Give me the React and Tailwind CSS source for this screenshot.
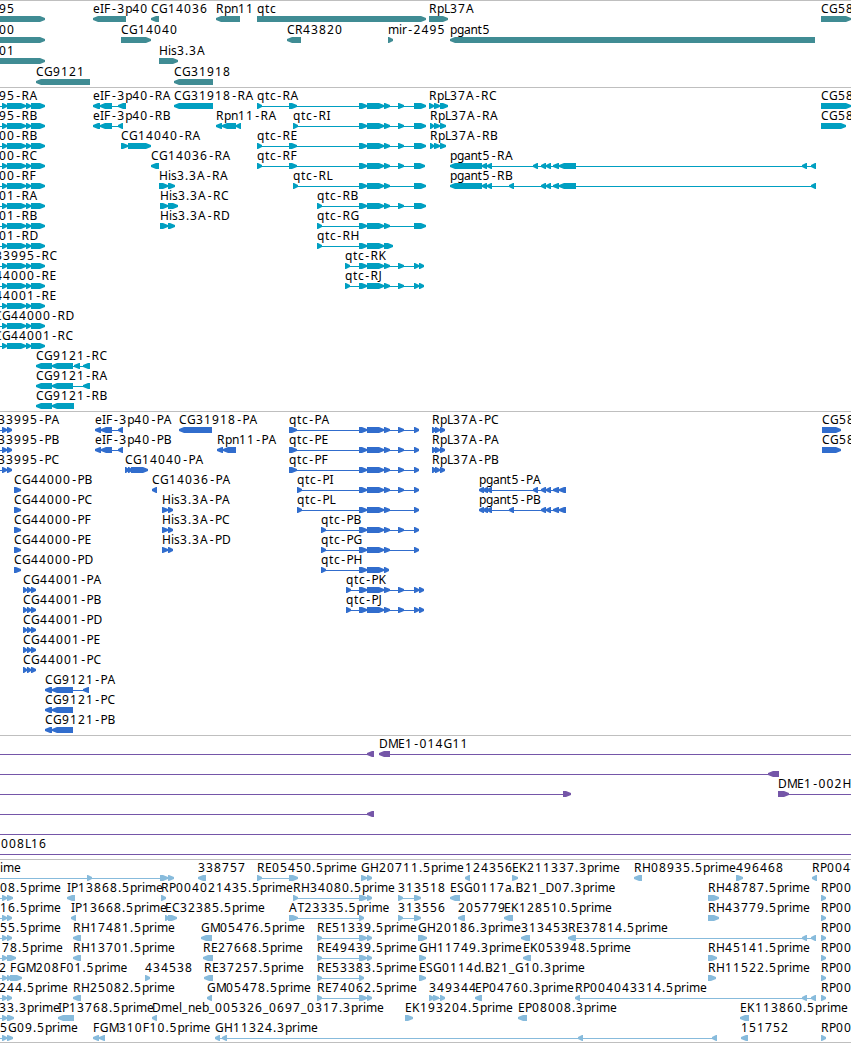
import clsx from 'clsx'

// Horizontal advance of each label character, in pixels
const ADVANCE = {
  A: 8.5, B: 8, C: 8, D: 9, E: 7, F: 6.7, G: 9, H: 9, I: 4, J: 4, K: 8, L: 6, M: 10, P: 7, R: 8, S: 7, T: 7,
  a: 6.5, b: 7, c: 6, d: 7, e: 7, g: 7, i: 3, l: 3, m: 11, n: 7, p: 7, q: 8, r: 5, s: 6, t: 5,
  '-': 6.5, '.': 4, _: 6,
}

// x position of every character, starting at the left edge of the label
const charPositions = (text, start) => {
  let x = start
  return [...text].map((ch) => {
    // hyphens are narrow, so centre them in their slot
    const pos = ch === '-' ? x + 1.2 : x
    x += ADVANCE[ch] ?? 8
    return pos
  })
}

// Feature helpers: f = forward strand, r = reverse strand
const f = (label, blocks, opts = {}) => ({ label, blocks, dir: 1, ...opts })
const r = (label, blocks, opts = {}) => ({ label, blocks, dir: -1, ...opts })

// Exons shared by several transcripts
const CLUSTER = [[2, 7], [7, 26], [26, 31], [31, 45]]
const cluster = (label, x) => f(label, CLUSTER, { x, from: 0 })

const QTC_MID = [[359, 367], [367, 384], [384, 390]]
const qtcR = (label, start, tail) => f(label, [...start, ...QTC_MID, ...tail])
const SHORT = [398, 404]
const PGANT_END = [[541, 546], [546, 551], [553, 559]]
const RP = f('RP00', [[821, 826]])
const pair = (label, x, end) => f(label, [[2, 7], [7, end]], { x, from: 0 })

const genes = [
  [
    f('95', [[-10, 45]], { x: -1 }),
    r('eIF-3p40', [[93, 126]]),
    r('CG14036', [[151, 159]]),
    r('Rpn11', [[216, 240]]),
    f('qtc', [[257, 426]]),
    f('RpL37A', [[429, 448]]),
    f('CG58', [[821, 851]]),
  ],
  [
    f('00', [[-10, 45]], { x: -1 }),
    f('CG14040', [[121, 151]]),
    r('CR43820', [[287, 301]]),
    f('mir-2495', [[388, 393]]),
    r('pgant5', [[450, 815]]),
  ],
  [f('01', [[-10, 45]], { x: -1 }), f('His3.3A', [[159, 178]])],
  [r('CG9121', [[36, 90]]), r('CG31918', [[174, 213]])],
]

const transcripts = [
  [
    cluster('95-RA', -1),
    r('eIF-3p40-RA', [[93, 100], [100, 112], [118, 126]]),
    r('CG31918-RA', [[174, 213]]),
    qtcR('qtc-RA', [[257, 262], [289, 297]], [SHORT, [414, 426]]),
    f('RpL37A-RC', [[429, 434], [434, 440], [440, 448]]),
    f('CG58', [[821, 851]]),
  ],
  [
    cluster('95-RB', -1),
    r('eIF-3p40-RB', [[93, 100], [100, 112], [118, 123]]),
    r('Rpn11-RA', [[216, 222], [222, 236], [236, 241]]),
    qtcR('qtc-RI', [[293, 298]], [SHORT, [414, 426]]),
    f('RpL37A-RA', [[430, 434], [434, 440], [440, 446]]),
    f('CG58', [[821, 846]]),
  ],
  [
    cluster('00-RB', -1),
    f('CG14040-RA', [[121, 128], [128, 151]]),
    qtcR('qtc-RE', [[257, 262], [289, 297]], [SHORT, [414, 426]]),
    f('RpL37A-RB', [[430, 434], [434, 440], [440, 446]]),
  ],
  [
    cluster('00-RC', -1),
    r('CG14036-RA', [[151, 159]]),
    qtcR('qtc-RF', [[257, 262], [289, 297]], [SHORT, [414, 425]]),
    r('pgant5-RA', [[450, 482], [482, 487], [487, 492], [533, 538], ...PGANT_END, [559, 576], [802, 807], [811, 816]]),
  ],
  [
    cluster('00-RF', -1),
    f('His3.3A-RA', [[159, 168], [168, 175]]),
    qtcR('qtc-RL', [[293, 298]], [[414, 426]]),
    r('pgant5-RB', [[450, 482], [482, 487], [487, 492], [509, 514], ...PGANT_END, [559, 576], [811, 816]]),
  ],
  [
    cluster('01-RA', -1),
    f('His3.3A-RC', [[160, 168], [168, 178]]),
    qtcR('qtc-RB', [[317, 322]], [SHORT, [414, 426]]),
  ],
  [
    cluster('01-RB', -1),
    f('His3.3A-RD', [[160, 168], [168, 175]]),
    qtcR('qtc-RG', [[317, 322]], [[414, 426]]),
  ],
  [cluster('01-RD', -1), f('qtc-RH', [[317, 322], [359, 367], [367, 384], [384, 393]])],
  [cluster('33995-RC', -5), qtcR('qtc-RK', [[345, 350]], [SHORT, [414, 419], [419, 424]])],
  [cluster('44000-RE', -5), qtcR('qtc-RJ', [[345, 350]], [SHORT, [414, 419], [419, 424]])],
  [cluster('44001-RE', -5)],
  [cluster('CG44000-RD', -6)],
  [cluster('CG44001-RC', -6)],
  [r('CG9121-RC', [[36, 52], [52, 73], [74, 80], [83, 90]])],
  [r('CG9121-RA', [[36, 52], [52, 73], [83, 90]])],
  [r('CG9121-RB', [[36, 52], [52, 74]])],
]

const RPL_P = [[432, 436], [435, 440], [440, 445]]
const PG_START = [[479, 484], [483, 488], [487, 492]]
const HIS_P = [[162, 168], [168, 173]]
const CG44001_P = [[23, 27], [27, 31], [31, 36]]

const proteins = [
  [
    pair('33995-PA', -2, 12),
    r('eIF-3p40-PA', [[95, 101], [101, 112], [118, 123]]),
    r('CG31918-PA', [[179, 212]]),
    qtcR('qtc-PA', [[289, 297]], [SHORT, [414, 419]]),
    f('RpL37A-PC', RPL_P),
    f('CG58', [[822, 841]]),
  ],
  [
    pair('33995-PB', -2, 12),
    r('eIF-3p40-PB', [[95, 101], [101, 112], [118, 123]]),
    r('Rpn11-PA', [[217, 223], [223, 236]]),
    qtcR('qtc-PE', [[289, 297]], [SHORT, [414, 419]]),
    f('RpL37A-PA', RPL_P),
    f('CG58', [[822, 841]]),
  ],
  [
    pair('33995-PC', -2, 12),
    f('CG14040-PA', [[125, 129], [128, 132], [131, 148]]),
    qtcR('qtc-PF', [[289, 297]], [SHORT, [414, 419]]),
    f('RpL37A-PB', RPL_P),
  ],
  [
    f('CG44000-PB', [[14, 21]]),
    r('CG14036-PA', [[152, 157]]),
    qtcR('qtc-PI', [[297, 302]], [SHORT, [414, 419]]),
    r('pgant5-PA', [...PG_START, [533, 538], ...PGANT_END, [559, 566]]),
  ],
  [
    f('CG44000-PC', [[14, 21]]),
    f('His3.3A-PA', HIS_P),
    qtcR('qtc-PL', [[297, 302]], [[414, 419]]),
    r('pgant5-PB', [...PG_START, [509, 514], ...PGANT_END, [559, 566]]),
  ],
  [
    f('CG44000-PF', [[14, 21]]),
    f('His3.3A-PC', HIS_P),
    qtcR('qtc-PB', [[321, 326]], [SHORT, [414, 419]]),
  ],
  [
    f('CG44000-PE', [[14, 21]]),
    f('His3.3A-PD', HIS_P),
    qtcR('qtc-PG', [[321, 326]], [[414, 419]]),
  ],
  [f('CG44000-PD', [[14, 21]]), f('qtc-PH', [[321, 326], [359, 367], [367, 384], [384, 389]])],
  [f('CG44001-PA', CG44001_P), qtcR('qtc-PK', [[346, 351]], [SHORT, [414, 419], [419, 424]])],
  [f('CG44001-PB', CG44001_P), qtcR('qtc-PJ', [[346, 351]], [SHORT, [414, 419], [419, 424]])],
  [f('CG44001-PD', CG44001_P)],
  [f('CG44001-PE', CG44001_P)],
  [f('CG44001-PC', CG44001_P)],
  [r('CG9121-PA', [[45, 52], [52, 73], [83, 89]])],
  [r('CG9121-PC', [[45, 52], [52, 73]])],
  [r('CG9121-PB', [[45, 52], [52, 73]])],
]

const clones = [
  [r('', [[367, 374]], { from: 0 }), r('DME1-014G11', [[379, 390]], { to: 851 })],
  [r('', [[768, 779]], { from: 0 })],
  [f('', [[563, 571]], { from: 0 }), f('DME1-002H', [[778, 789]], { to: 851 })],
  [r('', [[367, 374]], { from: 0 })],
  [f('', [], { from: 0, to: 851 })],
  [f('008L16', [], { x: 1, from: 0, to: 851 })],
]

const RE_BLOCKS = [[317, 322], [359, 367], [367, 372]]

const ests = [
  [
    f('ime', [[87, 92], [160, 168], [168, 174]], { x: 0, from: 0 }),
    r('338757', [[198, 206]]),
    f('RE05450.5prime', [[257, 262], [289, 298]]),
    f('GH20711.5prime', [[361, 367], [367, 372]]),
    r('124356', [[465, 470]]),
    f('EK211337.3prime', [[512, 518]]),
    r('RH08935.5prime', [[634, 642]]),
    f('496468', [[736, 743]]),
    r('RP004', [[812, 817]]),
  ],
  [
    pair('08.5prime', 0, 13),
    r('IP13868.5prime', [[67, 75]]),
    f('RP004021435.5prime', [[161, 166]]),
    f('RH34080.5prime', [[293, 298], [359, 367], [367, 372]]),
    f('313518', [[398, 403], [414, 421]]),
    r('ESG0117a.B21_D07.3prime', [[450, 460]]),
    f('RH48787.5prime', [[708, 719]]),
    RP,
  ],
  [
    pair('16.5prime', 0, 12),
    r('IP13668.5prime', [[71, 76]]),
    f('EC32385.5prime', [[165, 169], [168, 177]]),
    f('AT23335.5prime', [[289, 298], [359, 364]]),
    f('313556', [[398, 403], [414, 421]]),
    r('205779', [[458, 465]]),
    r('EK128510.5prime', [[504, 513]]),
    f('RH43779.5prime', [[708, 719]]),
    RP,
  ],
  [
    pair('55.5prime', 0, 12),
    r('RH17481.5prime', [[73, 81]]),
    r('GM05476.5prime', [[201, 212]]),
    f('RE51339.5prime', RE_BLOCKS),
    f('GH20186.3prime', [[418, 427]]),
    r('313453', [[521, 530]]),
    r('RE37814.5prime', [[568, 576], [802, 807], [811, 816]]),
    RP,
  ],
  [
    pair('78.5prime', 2, 16),
    r('RH13701.5prime', [[73, 81]]),
    r('RE27668.5prime', [[203, 213]]),
    f('RE49439.5prime', RE_BLOCKS),
    f('GH11749.3prime', [[419, 426]]),
    r('EK053948.5prime', [[523, 531]]),
    f('RH45141.5prime', [[708, 717]]),
    RP,
  ],
  [
    pair('2', -1, 11),
    f('FGM208F01.5prime', [[10, 22]]),
    f('434538', [[145, 150]]),
    r('RE37257.5prime', [[204, 213]]),
    f('RE53383.5prime', [[317, 322], [359, 364]]),
    f('ESG0114d.B21_G10.3prime', [[419, 426]]),
    f('RH11522.5prime', [[708, 716]]),
    RP,
  ],
  [
    pair('244.5prime', -1, 12),
    r('RH25082.5prime', [[73, 81]]),
    r('GM05478.5prime', [[207, 212]]),
    f('RE74062.5prime', RE_BLOCKS),
    f('349344', [[429, 434], [433, 439], [440, 445]]),
    r('EP04760.3prime', [[475, 482]]),
    r('RP004043314.5prime', [[575, 580], [802, 807], [811, 816]]),
    RP,
  ],
  [
    pair('33.3prime', -1, 14),
    r('IP13768.5prime', [[58, 74]]),
    r('Dmel_neb_005326_0697_0317.3prime', [[152, 157]]),
    f('EK193204.5prime', [[405, 413]]),
    r('EP08008.3prime', [[518, 527]]),
    r('EK113860.5prime', [[740, 749]]),
  ],
  [
    pair('5G09.5prime', 0, 13),
    r('FGM310F10.5prime', [[93, 99], [99, 105]]),
    r('GH11324.3prime', [[215, 220], [222, 227], [578, 583], [712, 717]]),
    r('151752', [[741, 748]]),
    RP,
  ],
]

// Bar with a pointed end on the side of its strand
const Block = ({ start, end, dir }) => {
  const tip = Math.min(5, end - start - 1)
  const points =
    dir > 0
      ? `${start},15 ${end - tip},15 ${end},17 ${end},19 ${end - tip},21 ${start},21`
      : `${end},15 ${start + tip},15 ${start},17 ${start},19 ${start + tip},21 ${end},21`
  return <polygon points={points} />
}

const Feature = ({ label, blocks, dir, x, from, to }) => {
  const start = from ?? blocks[0][0]
  const end = to ?? blocks[blocks.length - 1][1]
  return (
    <g>
      <rect x={start} y="18" width={end - start} height="1" />
      {blocks.map(([a, b]) => (
        <Block key={a} start={a} end={b} dir={dir} />
      ))}
      {label && (
        <text x={charPositions(label, x ?? blocks[0][0]).join(' ')} y="12" className="fill-black text-[12px]">
          {label}
        </text>
      )}
    </g>
  )
}

const Track = ({ rows, className, rowClassName = 'h-5' }) => (
  <section className={clsx('border-t border-[#bfbfbf]', className)}>
    {rows.map((features, i) => (
      <svg key={i} className={clsx('block w-full overflow-visible', rowClassName)}>
        {features.map((feature, j) => (
          <Feature key={j} {...feature} />
        ))}
      </svg>
    ))}
  </section>
)

export default function App() {
  return (
    <main className="flex h-[1043px] w-[851px] flex-col overflow-hidden bg-white font-['Noto_Sans',sans-serif]">
      <Track rows={genes} className="fill-[#408c94] pb-0.5" rowClassName="h-[21px]" />
      <Track rows={transcripts} className="fill-[#009fc1] pb-[3px]" />
      <Track rows={proteins} className="fill-[#316dcd] pb-[3px]" />
      <Track rows={clones} className="fill-[#7556a8] pb-[3px]" />
      <Track rows={ests} className="fill-[#87bbdc] border-b pb-0.5" />
    </main>
  )
}
